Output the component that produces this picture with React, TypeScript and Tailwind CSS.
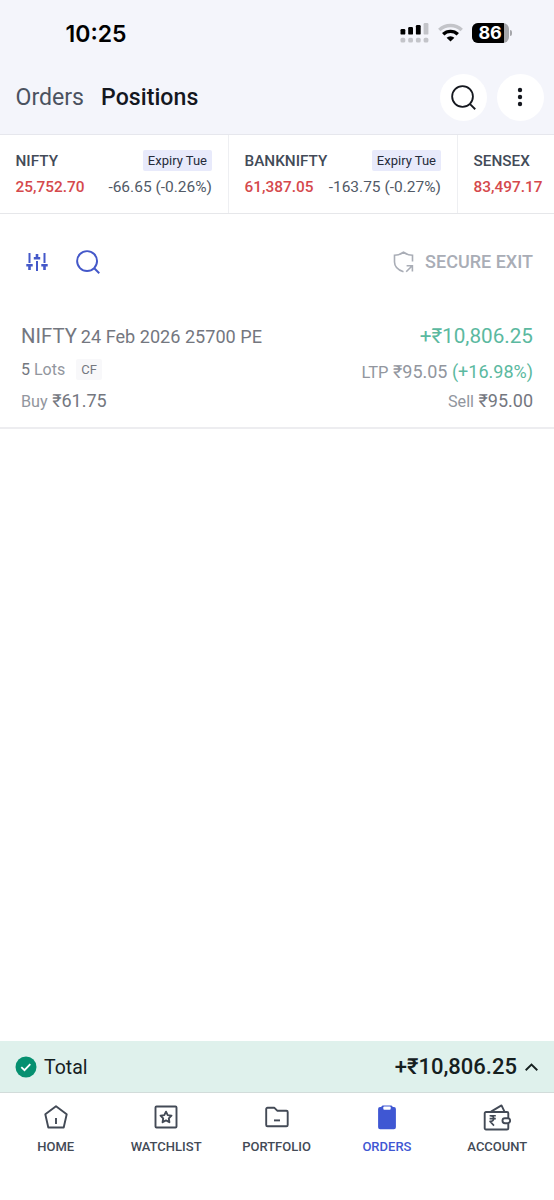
import React from 'react';

interface IndexQuote {
  name: string;
  price: string;
  change: string;
  expiry: string;
}

const INDICES: IndexQuote[] = [
  { name: 'NIFTY', price: '25,752.70', change: '-66.65 (-0.26%)', expiry: 'Expiry Tue' },
  { name: 'BANKNIFTY', price: '61,387.05', change: '-163.75 (-0.27%)', expiry: 'Expiry Tue' },
  { name: 'SENSEX', price: '83,497.17', change: '', expiry: '' },
];

function StatusBar() {
  return (
    <div className="h-[60px] flex items-center justify-between pl-[65.5px] pr-[42.5px] pt-[7px] font-[Inter,sans-serif] text-black">
      <span className="pt-[2px] text-[23px] leading-none font-semibold">10:25</span>
      <div className="flex items-center">
        {/* Dual SIM signal */}
        <svg className="-mt-[2px]" width="29" height="20" viewBox="0 0 29 20">
          <g fill="#000">
            <rect x="0.5" y="6" width="4.8" height="5.6" rx="1.2" />
            <rect x="8.2" y="4" width="4.8" height="7.6" rx="1.2" />
            <rect x="15.9" y="2" width="4.8" height="9.6" rx="1.2" />
          </g>
          <g fill="#c3c4c9">
            <rect x="23.6" y="0" width="4.8" height="11.6" rx="1.2" />
            <rect x="0.5" y="14.8" width="4.8" height="4.8" rx="1.6" />
            <rect x="8.2" y="14.8" width="4.8" height="4.8" rx="1.6" />
            <rect x="15.9" y="14.8" width="4.8" height="4.8" rx="1.6" />
            <rect x="23.6" y="14.8" width="4.8" height="4.8" rx="1.6" />
          </g>
        </svg>
        {/* Wifi */}
        <svg className="ml-[9px] -mt-[2px]" width="25" height="19" viewBox="0 0 25 19" fill="none">
          <path d="M1.3 7A16 16 0 0 1 23.7 7" stroke="#c3c4c9" strokeWidth="3.4" />
          <path d="M5.2 11.3A10.5 10.5 0 0 1 19.8 11.3" stroke="#000" strokeWidth="3.4" />
          <path d="M8.6 14.7a5.7 5.7 0 0 1 7.8 0L12.5 18.6z" fill="#000" />
        </svg>
        {/* Battery */}
        <div className="ml-[9px] -mt-[2px] w-[37px] h-5 rounded-[6px] overflow-hidden bg-[#a5a6aa] flex">
          <div className="w-8 h-5 bg-black text-white text-[18px] leading-5 font-bold text-center pl-[5px] tracking-[-0.2px]">86</div>
        </div>
        <div className="ml-px -mt-[2px] w-[2px] h-[6px] rounded-r-full bg-[#a5a6aa]" />
      </div>
    </div>
  );
}

function SearchIcon({ size, width }: { size: number; width: number }) {
  return (
    <svg width={size} height={size} viewBox="0 0 26 26" fill="none" stroke="currentColor" strokeWidth={width}>
      <circle cx="12" cy="12" r="10.8" />
      <path d="M19.8 19.8l5.4 5.4" />
    </svg>
  );
}

function Header() {
  return (
    <header className="h-[135px] bg-[#f4f5fb] border-b border-[#e6e7ed]">
      <StatusBar />
      <div className="h-[74px] flex items-center justify-between pl-[15.5px] pr-[10px]">
        <div className="flex items-baseline gap-[17px] pt-[2px] text-[23.1px] leading-7">
          <span className="text-[#4b5260]">Orders</span>
          <span className="text-[#14171f] font-medium tracking-[0.05px]">Positions</span>
        </div>
        <div className="flex gap-[10px] text-[#15181f]">
          <button type="button" className="size-[47px] rounded-full bg-white flex items-center justify-center">
            <SearchIcon size={25} width={1.9} />
          </button>
          <button type="button" className="size-[47px] rounded-full bg-white flex items-center justify-center pr-px">
            <svg width="6" height="20" viewBox="0 0 6 20" fill="currentColor">
              <circle cx="3" cy="3" r="2.2" />
              <circle cx="3" cy="10" r="2.2" />
              <circle cx="3" cy="17" r="2.2" />
            </svg>
          </button>
        </div>
      </div>
    </header>
  );
}

function IndexCard({ quote }: { quote: IndexQuote }) {
  return (
    <div className="w-[229px] shrink-0 h-full border-r border-[#eeeff2] pl-[15.5px] pr-4 pt-[15px]">
      <div className="h-[21px] flex items-center justify-between">
        <span className="pt-[2px] text-[15.3px] font-medium text-[#434b58]">{quote.name}</span>
        {quote.expiry && (
          <span className="h-[21px] px-[5px] rounded-[2px] bg-[#e8eafb] text-[13px] leading-[21px] text-[#262b3a]">{quote.expiry}</span>
        )}
      </div>
      <div className="mt-[6px] flex items-center justify-between text-[15.5px] leading-5 whitespace-nowrap">
        <span className="font-medium text-[15.4px] text-[#d5494c]">{quote.price}</span>
        <span className="text-[#525a67]">{quote.change}</span>
      </div>
    </div>
  );
}

function Toolbar() {
  return (
    <div className="h-[96px] flex items-center justify-between pl-[25.5px] pr-[21px]">
      <div className="flex items-center gap-[28.5px] text-[#4458c9]">
        <svg width="22" height="20" viewBox="0 0 22 20" fill="none" stroke="currentColor" strokeWidth="2">
          <path d="M3.5 1v10M11 9v10M18.5 1v10" />
          <path d="M0.3 13.3h6.4M7.8 6.2h6.4M15.3 13.3h6.4" strokeWidth="2.6" />
          <path d="M3.5 14v4M11 2v4M18.5 14v4" strokeWidth="2.6" />
        </svg>
        <SearchIcon size={24} width={2.1} />
      </div>
      <div className="flex items-center gap-[10px] text-[#a9adb6]">
        <svg width="22" height="22" viewBox="0 0 22 22" fill="none" stroke="currentColor" strokeWidth="1.6">
          <path d="M19.5 10.5V4.2C16 4.2 13 3.2 10.5 1.2C8 3.2 5 4.2 1.5 4.2V11c0 5 3.5 8 9 9.8" />
          <path d="M13.2 20.8l6-6M13.6 14.7h5.8v5.8" />
        </svg>
        <span className="text-[18px] leading-6 font-medium">SECURE EXIT</span>
      </div>
    </div>
  );
}

function PositionRow() {
  return (
    <div className="h-[119px] border-b-2 border-[#ededf0] px-[21px] pt-[12px] text-[#74777f]">
      <div className="h-[28px] flex items-center justify-between">
        <div className="flex items-baseline gap-1">
          <span className="text-[20.3px]">NIFTY</span>
          <span className="text-[18.1px]">24 Feb 2026 25700 PE</span>
        </div>
        <span className="pt-[2px] text-[20.7px] text-[#5bb9a0]">+₹10,806.25</span>
      </div>
      <div className="mt-[7px] h-[28px] flex items-center justify-between">
        <div className="flex items-center pb-[3px]">
          <span className="pt-px text-[16px]">5 <span className="text-[#92969e]">Lots</span></span>
          <span className="ml-[11px] h-[21px] px-[5px] rounded-[2px] bg-[#f8f8fa] text-[13px] leading-[21px]">CF</span>
        </div>
        <div className="pt-px text-[18px] text-[#92969e]">
          <span className="text-[16.5px]">LTP</span> ₹95.05 <span className="text-[#5bb9a0]">(+16.98%)</span>
        </div>
      </div>
      <div className="mt-[2px] h-[28px] flex items-center justify-between text-[18px]">
        <div><span className="text-[16.2px] text-[#92969e]">Buy</span> ₹61.75</div>
        <div><span className="text-[16.2px] text-[#92969e]">Sell</span> ₹95.00</div>
      </div>
    </div>
  );
}

function TotalBar() {
  return (
    <div className="h-[52px] bg-[#dff1ec] border-b border-[#d2dcda] flex items-center justify-between pl-[15px] pr-4 text-[#15201f]">
      <div className="flex items-center gap-[7px]">
        <svg width="22" height="22" viewBox="0 0 22 22" fill="none">
          <circle cx="11" cy="11" r="10.5" fill="#069070" />
          <path d="M6.3 11.1l3.2 3.1 5.8-6" stroke="#fff" strokeWidth="1.8" />
        </svg>
        <span className="pt-[2px] text-[19.5px]">Total</span>
      </div>
      <div className="flex items-center gap-[8px]">
        <span className="text-[22px] font-medium">+₹10,806.25</span>
        <svg width="13" height="8" viewBox="0 0 13 8" fill="none" stroke="currentColor" strokeWidth="1.9">
          <path d="M0.7 7.2L6.5 1.5l5.8 5.7" />
        </svg>
      </div>
    </div>
  );
}

const NAV_ITEMS = [
  {
    label: 'HOME',
    icon: (
      <>
        <path d="M14 3.2L24.7 11.2L21.7 24.5H6.3L3.3 11.2Z" />
        <path d="M14 15v6" />
      </>
    ),
  },
  {
    label: 'WATCHLIST',
    icon: (
      <>
        <rect x="3.5" y="3.5" width="21" height="21" rx="1" />
        <path d="M14 8.7l1.7 3.4 3.8.6-2.7 2.7.6 3.8-3.4-1.8-3.4 1.8.6-3.8-2.7-2.7 3.8-.6z" />
      </>
    ),
  },
  {
    label: 'PORTFOLIO',
    icon: (
      <>
        <path d="M3.2 6a1.3 1.3 0 0 1 1.3-1.3h6.7l3 3h9.2A1.3 1.3 0 0 1 24.7 9v13a1.3 1.3 0 0 1-1.3 1.3H4.5A1.3 1.3 0 0 1 3.2 22z" />
        <path d="M11 17.4h6" />
      </>
    ),
  },
  {
    label: 'ORDERS',
    icon: (
      <>
        <path d="M9.5 2.4h9l1.5 1.7h1a1.9 1.9 0 0 1 1.9 1.9v18.2a2 2 0 0 1-2 2H7.1a2 2 0 0 1-2-2V6A1.9 1.9 0 0 1 7 4.1h1z" fill="currentColor" stroke="none" />
        <rect x="10.3" y="3.6" width="7.4" height="3.2" rx="1" fill="#fff" stroke="none" />
      </>
    ),
  },
  {
    label: 'ACCOUNT',
    icon: (
      <>
        <path d="M25.3 15V10.3A1.3 1.3 0 0 0 24 9H3A1.3 1.3 0 0 0 1.7 10.3v14.9A1.3 1.3 0 0 0 3 26.5h21a1.3 1.3 0 0 0 1.3-1.3v-4.4" />
        <rect x="19.5" y="15.2" width="7.6" height="5" rx="2.4" />
        <path d="M8 8.6L18.5 2.4L21.5 8.6" />
        <path d="M6.6 12.8h6.2M6.6 15.6h6.2M7 12.8c5 0 5 5.6 0 5.6l4 4.2" strokeWidth="1.6" />
      </>
    ),
  },
];

function BottomNav({ active }: { active: string }) {
  return (
    <nav className="h-[107px] flex pt-[10px] pr-px pl-px bg-white">
      {NAV_ITEMS.map((item) => (
        <button
          key={item.label}
          type="button"
          className={`flex-1 flex flex-col items-center justify-start text-[13px] font-medium ${
            item.label === active ? 'text-[#3f57d3]' : 'text-[#434a56]'
          }`}
        >
          <svg className="mr-px" width="28" height="28" viewBox="0 0 28 28" fill="none" stroke="currentColor" strokeWidth="1.9" strokeLinejoin="round">
            {item.icon}
          </svg>
          <span className="mt-[6px] mr-px leading-5">{item.label}</span>
        </button>
      ))}
    </nav>
  );
}

export default function App() {
  return (
    <div className="w-[554px] h-[1200px] flex flex-col overflow-hidden bg-white font-[Roboto,sans-serif]">
      <Header />
      <div className="h-[79px] flex overflow-hidden border-b border-[#e6e7ea]">
        {INDICES.map((quote) => (
          <IndexCard key={quote.name} quote={quote} />
        ))}
      </div>
      <main className="flex-1">
        <Toolbar />
        <PositionRow />
      </main>
      <TotalBar />
      <BottomNav active="ORDERS" />
    </div>
  );
}
